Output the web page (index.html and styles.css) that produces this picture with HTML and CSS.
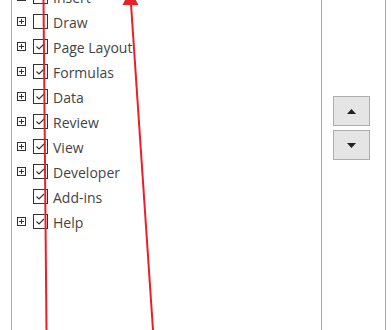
FILE: index.html
```html
<!DOCTYPE html>
<html lang="en">
<head>
  <meta charset="UTF-8">
  <title>Customize the Ribbon</title>
  <link rel="stylesheet" href="styles.css">
</head>
<body>
  <div class="dialog">
    <div class="tree">
      <div class="tree-list">
        <div class="tree-row">
          <span class="expander"><svg width="9" height="9" viewBox="0 0 9 9"><rect x="0.5" y="0.5" width="8" height="8" fill="none" stroke="#333"/><path d="M2 4.5h5M4.5 2v5" stroke="#333"/></svg></span>
          <span class="check checked"><svg width="15" height="15" viewBox="0 0 15 15"><path d="M3.5 7.5l2.5 2.5 5-5" fill="none" stroke="#333" stroke-width="1.2"/></svg></span>
          <span class="label">Insert</span>
        </div>
        <div class="tree-row">
          <span class="expander"><svg width="9" height="9" viewBox="0 0 9 9"><rect x="0.5" y="0.5" width="8" height="8" fill="none" stroke="#333"/><path d="M2 4.5h5M4.5 2v5" stroke="#333"/></svg></span>
          <span class="check"></span>
          <span class="label">Draw</span>
        </div>
        <div class="tree-row">
          <span class="expander"><svg width="9" height="9" viewBox="0 0 9 9"><rect x="0.5" y="0.5" width="8" height="8" fill="none" stroke="#333"/><path d="M2 4.5h5M4.5 2v5" stroke="#333"/></svg></span>
          <span class="check checked"><svg width="15" height="15" viewBox="0 0 15 15"><path d="M3.5 7.5l2.5 2.5 5-5" fill="none" stroke="#333" stroke-width="1.2"/></svg></span>
          <span class="label">Page Layout</span>
        </div>
        <div class="tree-row">
          <span class="expander"><svg width="9" height="9" viewBox="0 0 9 9"><rect x="0.5" y="0.5" width="8" height="8" fill="none" stroke="#333"/><path d="M2 4.5h5M4.5 2v5" stroke="#333"/></svg></span>
          <span class="check checked"><svg width="15" height="15" viewBox="0 0 15 15"><path d="M3.5 7.5l2.5 2.5 5-5" fill="none" stroke="#333" stroke-width="1.2"/></svg></span>
          <span class="label">Formulas</span>
        </div>
        <div class="tree-row">
          <span class="expander"><svg width="9" height="9" viewBox="0 0 9 9"><rect x="0.5" y="0.5" width="8" height="8" fill="none" stroke="#333"/><path d="M2 4.5h5M4.5 2v5" stroke="#333"/></svg></span>
          <span class="check checked"><svg width="15" height="15" viewBox="0 0 15 15"><path d="M3.5 7.5l2.5 2.5 5-5" fill="none" stroke="#333" stroke-width="1.2"/></svg></span>
          <span class="label">Data</span>
        </div>
        <div class="tree-row">
          <span class="expander"><svg width="9" height="9" viewBox="0 0 9 9"><rect x="0.5" y="0.5" width="8" height="8" fill="none" stroke="#333"/><path d="M2 4.5h5M4.5 2v5" stroke="#333"/></svg></span>
          <span class="check checked"><svg width="15" height="15" viewBox="0 0 15 15"><path d="M3.5 7.5l2.5 2.5 5-5" fill="none" stroke="#333" stroke-width="1.2"/></svg></span>
          <span class="label">Review</span>
        </div>
        <div class="tree-row">
          <span class="expander"><svg width="9" height="9" viewBox="0 0 9 9"><rect x="0.5" y="0.5" width="8" height="8" fill="none" stroke="#333"/><path d="M2 4.5h5M4.5 2v5" stroke="#333"/></svg></span>
          <span class="check checked"><svg width="15" height="15" viewBox="0 0 15 15"><path d="M3.5 7.5l2.5 2.5 5-5" fill="none" stroke="#333" stroke-width="1.2"/></svg></span>
          <span class="label">View</span>
        </div>
        <div class="tree-row">
          <span class="expander"><svg width="9" height="9" viewBox="0 0 9 9"><rect x="0.5" y="0.5" width="8" height="8" fill="none" stroke="#333"/><path d="M2 4.5h5M4.5 2v5" stroke="#333"/></svg></span>
          <span class="check checked"><svg width="15" height="15" viewBox="0 0 15 15"><path d="M3.5 7.5l2.5 2.5 5-5" fill="none" stroke="#333" stroke-width="1.2"/></svg></span>
          <span class="label">Developer</span>
        </div>
        <div class="tree-row">
          <span class="expander empty"></span>
          <span class="check checked"><svg width="15" height="15" viewBox="0 0 15 15"><path d="M3.5 7.5l2.5 2.5 5-5" fill="none" stroke="#333" stroke-width="1.2"/></svg></span>
          <span class="label">Add-ins</span>
        </div>
        <div class="tree-row">
          <span class="expander"><svg width="9" height="9" viewBox="0 0 9 9"><rect x="0.5" y="0.5" width="8" height="8" fill="none" stroke="#333"/><path d="M2 4.5h5M4.5 2v5" stroke="#333"/></svg></span>
          <span class="check checked"><svg width="15" height="15" viewBox="0 0 15 15"><path d="M3.5 7.5l2.5 2.5 5-5" fill="none" stroke="#333" stroke-width="1.2"/></svg></span>
          <span class="label">Help</span>
        </div>
      </div>
    </div>

    <div class="side">
      <button class="move-btn" type="button" aria-label="Move up"><svg width="9" height="5" viewBox="0 0 9 5"><path d="M4.5 0L9 5H0z" fill="#222"/></svg></button>
      <button class="move-btn" type="button" aria-label="Move down"><svg width="9" height="5" viewBox="0 0 9 5"><path d="M0 0h9L4.5 5z" fill="#222"/></svg></button>
    </div>
  </div>

  <svg class="annotation" width="391" height="330" viewBox="0 0 391 330">
    <line x1="43.5" y1="0" x2="46.5" y2="330" stroke="#e8202a" stroke-width="2"/>
    <line x1="131" y1="4" x2="153" y2="330" stroke="#e8202a" stroke-width="2"/>
    <path d="M130 -10L138.5 5H122.5z" fill="#e8202a"/>
  </svg>
</body>
</html>
```

FILE: styles.css
```css
body {
  margin: 0;
  background: #fff;
  font-family: 'Open Sans', 'Noto Sans', sans-serif;
  overflow: hidden;
}

.dialog {
  display: flex;
  height: 330px;
  padding-left: 11px;
}

.tree {
  width: 309px;
  border-left: 1px solid #ababab;
  border-right: 1px solid #ababab;
  overflow: hidden;
}

.tree-list {
  margin-top: -16px;
}

.tree-row {
  display: flex;
  align-items: center;
  height: 25px;
  padding-left: 5px;
}

.expander {
  width: 9px;
  height: 9px;
  display: flex;
  margin-right: 7px;
}

.check {
  width: 15px;
  height: 15px;
  box-sizing: border-box;
  border: 1px solid #333;
  display: flex;
  margin-right: 5px;
}

.check svg {
  margin: -1px;
}

.label {
  font-size: 14px;
  color: #444;
  white-space: nowrap;
  padding-top: 2px;
}

.side {
  width: 64px;
  border-right: 1px solid #ababab;
  display: flex;
  flex-direction: column;
  gap: 4px;
  padding: 96px 0 0 11px;
  box-sizing: border-box;
}

.move-btn {
  width: 37px;
  height: 30px;
  padding: 0;
  background: #e5e5e5;
  border: 1px solid #adadad;
  border-radius: 0;
  display: flex;
  align-items: center;
  justify-content: center;
}

.annotation {
  position: absolute;
  top: 0;
  left: 0;
  pointer-events: none;
}
```
